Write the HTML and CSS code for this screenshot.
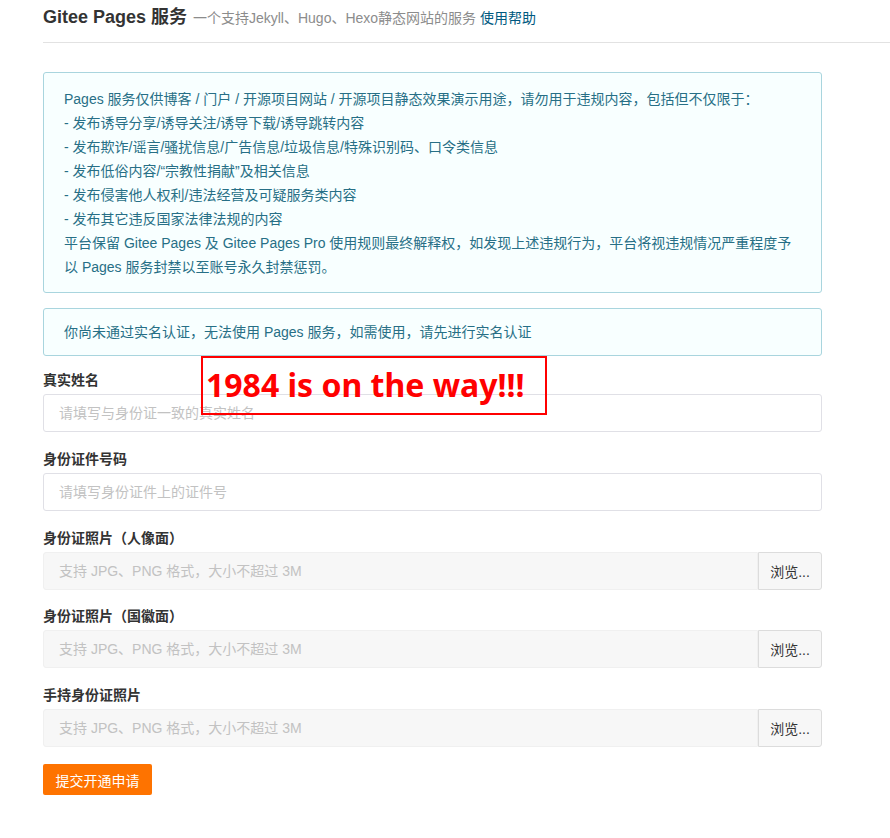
FILE: index.html
```html
<!DOCTYPE html>
<html lang="zh-CN">
<head>
<meta charset="utf-8">
<title>Gitee Pages 服务</title>
<link rel="stylesheet" href="styles.css">
</head>
<body>
<div class="page">
  <div class="header">
    <span class="title">Gitee Pages 服务</span>
    <span class="subtitle">一个支持Jekyll、Hugo、Hexo静态网站的服务</span>
    <a class="help" href="#">使用帮助</a>
  </div>
  <div class="content">
    <div class="message">
      Pages 服务仅供博客 / 门户 / 开源项目网站 / 开源项目静态效果演示用途，请勿用于违规内容，包括但不仅限于：<br>
      - 发布诱导分享/诱导关注/诱导下载/诱导跳转内容<br>
      - 发布欺诈/谣言/骚扰信息/广告信息/垃圾信息/特殊识别码、口令类信息<br>
      - 发布低俗内容/“宗教性捐献”及相关信息<br>
      - 发布侵害他人权利/违法经营及可疑服务类内容<br>
      - 发布其它违反国家法律法规的内容<br>
      平台保留 Gitee Pages 及 Gitee Pages Pro 使用规则最终解释权，如发现上述违规行为，平台将视违规情况严重程度予以 Pages 服务封禁以至账号永久封禁惩罚。
    </div>
    <div class="message short">你尚未通过实名认证，无法使用 Pages 服务，如需使用，请先进行实名认证</div>

    <form class="form">
      <div class="field">
        <label class="label">真实姓名</label>
        <input class="input" type="text" placeholder="请填写与身份证一致的真实姓名">
      </div>
      <div class="field">
        <label class="label">身份证件号码</label>
        <input class="input" type="text" placeholder="请填写身份证件上的证件号">
      </div>
      <div class="field field-tight">
        <label class="label">身份证照片（人像面）</label>
        <div class="file">
          <input class="input file-input" type="text" placeholder="支持 JPG、PNG 格式，大小不超过 3M" disabled>
          <span class="browse">浏览...</span>
        </div>
      </div>
      <div class="field">
        <label class="label">身份证照片（国徽面）</label>
        <div class="file">
          <input class="input file-input" type="text" placeholder="支持 JPG、PNG 格式，大小不超过 3M" disabled>
          <span class="browse">浏览...</span>
        </div>
      </div>
      <div class="field">
        <label class="label">手持身份证照片</label>
        <div class="file">
          <input class="input file-input" type="text" placeholder="支持 JPG、PNG 格式，大小不超过 3M" disabled>
          <span class="browse">浏览...</span>
        </div>
      </div>
      <button class="submit" type="button">提交开通申请</button>
    </form>
  </div>
  <div class="stamp">1984 is on the way!!!</div>
</div>
</body>
</html>
```
FILE: styles.css
```css
html, body {
  margin: 0;
  padding: 0;
  background: #fff;
}
body {
  font-family: "Liberation Sans", Arial, "Noto Sans CJK SC", sans-serif;
  font-size: 14px;
  color: #333;
}
.page {
  position: relative;
  padding-left: 43px;
}
.header {
  height: 43px;
  border-bottom: 1px solid #e2e2e2;
  box-sizing: border-box;
  padding-top: 5px;
  white-space: nowrap;
}
.title {
  font-size: 18px;
  font-weight: bold;
  color: #333;
  line-height: 24px;
}
.subtitle {
  font-size: 14px;
  color: #8c8c8c;
  margin-left: 2px;
}
.help {
  font-size: 14px;
  color: #005980;
  text-decoration: none;
}
.content {
  width: 779px;
  padding-top: 29px;
}
.message {
  background: #f8ffff;
  border: 1px solid #a9d5de;
  border-radius: 3px;
  color: #276f86;
  line-height: 24px;
  padding: 14px 20px 13px 20px;
}
.message.short {
  margin-top: 15px;
  padding: 11px 20px;
}
.form {
  padding-top: 14px;
}
.field {
  margin-bottom: 17px;
}
.field-tight {
  margin-bottom: 16px;
}
.label {
  display: block;
  font-weight: bold;
  line-height: 20px;
  margin-bottom: 4px;
  color: #333;
}
.input {
  display: block;
  width: 100%;
  height: 38px;
  box-sizing: border-box;
  border: 1px solid #e0e0e6;
  border-radius: 3px;
  padding: 0 15px;
  font-family: inherit;
  font-size: 14px;
  color: #333;
  background: #fff;
  outline: none;
}
.input::placeholder {
  color: #c2c2c2;
}
.file {
  display: flex;
}
.file-input {
  flex: 1;
  background: #f7f7f7;
  border-color: #f0f0f0;
  border-radius: 3px 0 0 3px;
}
.browse {
  flex: none;
  width: 64px;
  height: 38px;
  box-sizing: border-box;
  border: 1px solid #dcdcdc;
  border-radius: 0 3px 3px 0;
  background: #f7f7f7;
  color: #333;
  display: flex;
  align-items: center;
  justify-content: center;
}
.submit {
  display: block;
  margin-top: 1px;
  width: 109px;
  height: 31px;
  border: none;
  border-radius: 2px;
  background: #fe7300;
  color: #fff;
  font-family: inherit;
  font-size: 14px;
  padding: 0;
}
.stamp {
  position: absolute;
  left: 201px;
  top: 356px;
  width: 346px;
  height: 59px;
  box-sizing: border-box;
  border: 2px solid #ff0000;
  color: #ff0000;
  font-family: "Noto Sans", sans-serif;
  font-weight: bold;
  font-size: 32px;
  line-height: 54px;
  padding-left: 3px;
  white-space: nowrap;
}
```
